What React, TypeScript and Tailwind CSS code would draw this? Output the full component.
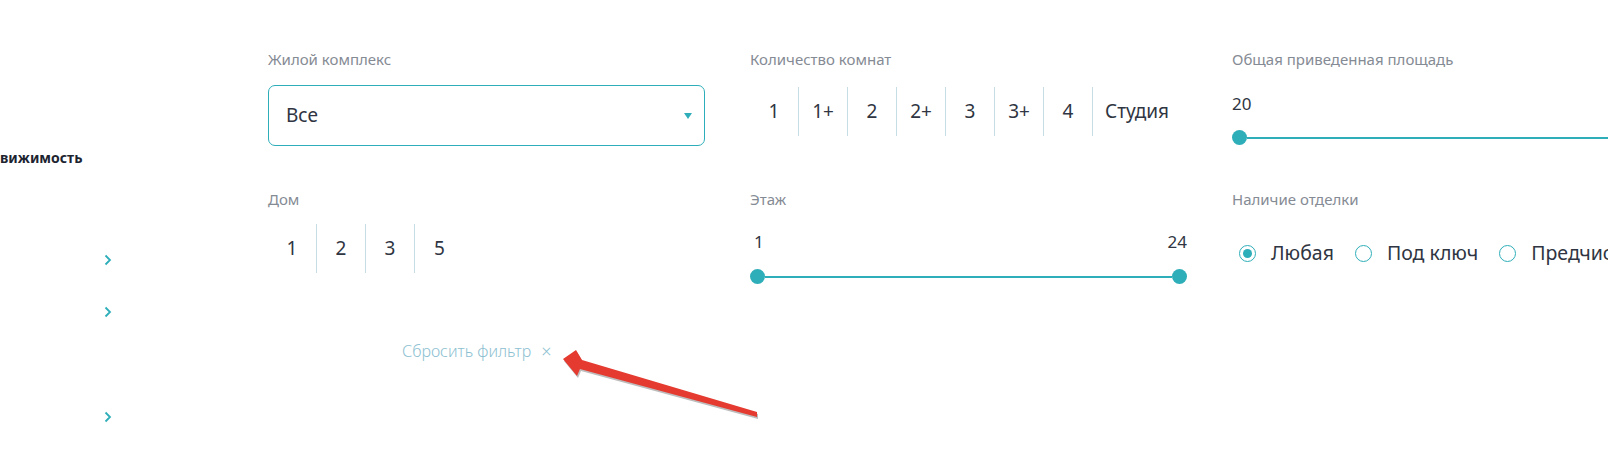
const TEAL = '#2eaeb9';

const rooms = ['1', '1+', '2', '2+', '3', '3+', '4', 'Студия'];
const houses = ['1', '2', '3', '5'];
const finishes = [
	{label: 'Любая', checked: true},
	{label: 'Под ключ', checked: false},
	{label: 'Предчистовая', checked: false},
];

const Label = ({children}: {children: string}) => (
	<div className="text-[15px] leading-[18px] text-[#858b94]">{children}</div>
);

const Chevron = () => (
	<svg width="8" height="12" viewBox="0 0 8 12" fill="none">
		<path d="M1.5 1.5 6 6l-4.5 4.5" stroke={TEAL} strokeWidth="1.8"/>
	</svg>
);

const Segmented = ({items}: {items: string[]}) => (
	<div className="flex h-[49px] items-stretch">
		{items.map((item, index) => (
			<div
				key={item}
				className={`flex min-w-[49px] items-center justify-center px-[12px] text-[19px] text-[#2f3542] ${index < items.length - 1 ? 'border-r border-[#c6dde6]' : ''}`}
			>
				{item}
			</div>
		))}
	</div>
);

const Thumb = () => <div className="h-[15px] w-[15px] shrink-0 rounded-full bg-[#2eaeb9]"/>;

const RangeTrack = () => (
	<div className="flex h-[15px] items-center">
		<Thumb/>
		<div className="h-[2px] flex-1 bg-[#2eaeb9]"/>
		<Thumb/>
	</div>
);

const Radio = ({checked}: {checked: boolean}) => (
	<span className="flex h-[17px] w-[17px] shrink-0 items-center justify-center rounded-full border border-[#2eaeb9]">
		{checked && <span className="h-[9px] w-[9px] rounded-full bg-[#2eaeb9]"/>}
	</span>
);

const ARROW = '757,412 757,417 580,369 577,376 563,359 576,350 582,360';

export default function App() {
	return (
		<div className="relative h-[462px] w-full overflow-hidden bg-white" style={{fontFamily: '"Noto Sans", "Open Sans", sans-serif'}}>
			<div className="flex w-[1700px]">
				{/* sidebar */}
				<div className="flex w-[268px] shrink-0 flex-col">
					<div className="mt-[149px] text-[14px] leading-[18px] font-bold text-[#1d2430]">вижимость</div>
					<div className="mt-[87px] pl-[104px]"><Chevron/></div>
					<div className="mt-[40px] pl-[104px]"><Chevron/></div>
					<div className="mt-[93px] pl-[104px]"><Chevron/></div>
				</div>

				{/* filters */}
				<div className="grid grid-cols-[437px_437px_437px] grid-rows-[140px_auto] gap-x-[45px] pt-[50px]">
					<div className="flex flex-col">
						<Label>Жилой комплекс</Label>
						<div className="mt-[17px] flex h-[61px] items-center justify-between rounded-[7px] border border-[#2eaeb9] pr-[12px] pl-[17px]">
							<span className="text-[19px] text-[#2f3542]">Все</span>
							<svg width="8" height="6" viewBox="0 0 8 6"><path d="M0 0h8L4 6z" fill={TEAL}/></svg>
						</div>
					</div>

					<div className="flex flex-col">
						<Label>Количество комнат</Label>
						<div className="mt-[19px]"><Segmented items={rooms}/></div>
					</div>

					<div className="flex flex-col">
						<Label>Общая приведенная площадь</Label>
						<div className="mt-[26px] text-[17px] leading-[20px] text-[#2f3542]">20</div>
						<div className="mt-[16px]"><RangeTrack/></div>
					</div>

					<div className="flex flex-col">
						<Label>Дом</Label>
						<div className="mt-[16px]"><Segmented items={houses}/></div>
						<div className="mt-[68px] flex items-center gap-[10px] pl-[134px] text-[16px] leading-[20px] font-light text-[#8dbfd1]">
							<span>Сбросить фильтр</span>
							<span className="text-[18px]">×</span>
						</div>
					</div>

					<div className="flex flex-col">
						<Label>Этаж</Label>
						<div className="mt-[24px] flex justify-between pl-[4px] text-[17px] leading-[20px] text-[#2f3542]">
							<span>1</span>
							<span>24</span>
						</div>
						<div className="mt-[17px]"><RangeTrack/></div>
					</div>

					<div className="flex flex-col">
						<Label>Наличие отделки</Label>
						<div className="mt-[35px] flex h-[20px] w-max items-center gap-[12px] pl-[7px]">
							{finishes.map(item => (
								<label key={item.label} className="flex shrink-0 items-center gap-[15px] pr-[9px] text-[19.5px] whitespace-nowrap text-[#2f3542]">
									<Radio checked={item.checked}/>
									{item.label}
								</label>
							))}
						</div>
					</div>
				</div>
			</div>

			{/* annotation arrow */}
			<svg className="pointer-events-none absolute top-0 left-0" width="1608" height="462">
				<polygon points={ARROW} fill="#bdbdbd" transform="translate(1 2)"/>
				<polygon points={ARROW} fill="#e43a2f"/>
			</svg>
		</div>
	);
}
